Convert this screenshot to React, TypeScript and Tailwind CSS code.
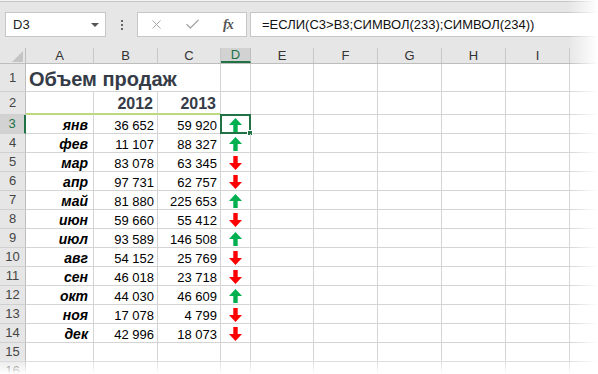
import { X, Check } from 'lucide-react';

const COLS = [
  { key: 'A', w: 'w-[68px]' },
  { key: 'B', w: 'w-[64px]' },
  { key: 'C', w: 'w-[63px]' },
  { key: 'D', w: 'w-[30px]' },
  { key: 'E', w: 'w-[63px]' },
  { key: 'F', w: 'w-[64px]' },
  { key: 'G', w: 'w-[64px]' },
  { key: 'H', w: 'w-[64px]' },
  { key: 'I', w: 'w-[64px]' },
  { key: 'J', w: 'w-[64px]' },
];

const DATA: [string, string, string][] = [
  ['янв', '36 652', '59 920'],
  ['фев', '11 107', '88 327'],
  ['мар', '83 078', '63 345'],
  ['апр', '97 731', '62 757'],
  ['май', '81 880', '225 653'],
  ['июн', '59 660', '55 412'],
  ['июл', '93 589', '146 508'],
  ['авг', '54 152', '25 769'],
  ['сен', '46 018', '23 718'],
  ['окт', '44 030', '46 609'],
  ['ноя', '17 078', '4 799'],
  ['дек', '42 996', '18 073'],
];

const toNum = (s: string) => Number(s.replace(/\s/g, ''));

function Arrow({ up }: { up: boolean }) {
  return (
    <svg width="13" height="14" viewBox="0 0 13 14" className={up ? '' : 'rotate-180'}>
      <polygon
        points="6.5,0 13,7 8.7,7 8.7,14 4.3,14 4.3,7 0,7"
        fill={up ? '#00b050' : '#ff0000'}
      />
    </svg>
  );
}

function RowHead({ n, h, active }: { n: number; h: string; active?: boolean }) {
  return (
    <div
      className={`${h} w-[26px] shrink-0 flex items-center justify-center border-b border-[#d0d0d0] text-[13px] ${
        active
          ? 'bg-[#d2d2d2] text-[#217346] border-r-2 border-r-[#217346]'
          : 'bg-[#e6e6e6] text-[#444] border-r border-r-[#bdbdbd]'
      }`}
    >
      {n}
    </div>
  );
}

function Cell({
  w,
  className = '',
  children,
}: {
  w: string;
  className?: string;
  children?: React.ReactNode;
}) {
  return (
    <div className={`${w} shrink-0 border-r border-b border-[#d4d4d4] flex items-center ${className}`}>
      {children}
    </div>
  );
}

export default function App() {
  return (
    <div
      className="relative w-[598px] h-[374px] overflow-hidden bg-white text-black"
      style={{ fontFamily: '"Liberation Sans", Arial, sans-serif' }}
    >
      {/* Formula bar */}
      <div className="h-px bg-[#f4f4f4]" />
      <div className="h-[47px] bg-[#e6e6e6] border-t border-[#c6c6c6] flex items-start pt-[10px]">
        <div className="ml-[5px] w-[101px] h-[25px] bg-white border border-[#c6c6c6] flex items-center justify-between pl-[7px] pr-[6px] text-[13px] text-[#222]">
          <span>D3</span>
          <span className="w-0 h-0 border-l-[4px] border-r-[4px] border-t-[4px] border-l-transparent border-r-transparent border-t-[#555]" />
        </div>
        <div className="w-[31px] h-[25px] flex flex-col items-center justify-center gap-[2px]">
          <span className="w-[2px] h-[2px] bg-[#666]" />
          <span className="w-[2px] h-[2px] bg-[#666]" />
          <span className="w-[2px] h-[2px] bg-[#666]" />
        </div>
        <div className="w-[110px] h-[25px] bg-white border border-[#c6c6c6] flex items-center">
          <X size={15} strokeWidth={1.6} className="ml-[11px] text-[#a6a6a6]" />
          <Check size={17} strokeWidth={1.8} className="ml-[20px] text-[#a6a6a6]" />
          <span
            className="ml-[22px] text-[14px] italic font-bold text-[#555] tracking-[-1px]"
            style={{ fontFamily: '"Liberation Serif", serif' }}
          >
            fx
          </span>
        </div>
        <div className="ml-[3px] flex-1 h-[25px] bg-white border border-[#c6c6c6] border-r-0 flex items-center pl-[11px] text-[13px] text-[#111] whitespace-nowrap">
          =ЕСЛИ(C3&gt;B3;СИМВОЛ(233);СИМВОЛ(234))
        </div>
      </div>

      {/* Column headers */}
      <div className="flex h-[16px] bg-[#e6e6e6] border-b border-[#bdbdbd]">
        <div className="w-[26px] shrink-0 border-r border-[#bdbdbd] flex items-end justify-end pr-[2px] pb-[1px]">
          <svg width="11" height="11" viewBox="0 0 11 11">
            <polygon points="11,0 11,11 0,11" fill="#c4c4c4" />
          </svg>
        </div>
        {COLS.map((c) =>
          c.key === 'D' ? (
            <div
              key={c.key}
              className={`${c.w} shrink-0 bg-[#d2d2d2] border-r border-[#bdbdbd] border-b-2 border-b-[#217346] flex items-center justify-center text-[13px] text-[#217346]`}
            >
              D
            </div>
          ) : (
            <div
              key={c.key}
              className={`${c.w} shrink-0 border-r border-[#c8c8c8] flex items-center justify-center text-[13px] text-[#333]`}
            >
              {c.key === 'J' ? '' : c.key}
            </div>
          )
        )}
      </div>

      {/* Row 1 */}
      <div className="flex">
        <RowHead n={1} h="h-[28px]" />
        <div className="w-[195px] shrink-0 h-[28px] border-r border-b border-[#d4d4d4] flex items-center pl-[3px] pt-[2px] text-[20px] font-bold text-[#353c47] whitespace-nowrap">
          Объем продаж
        </div>
        {COLS.slice(3).map((c) => (
          <Cell key={c.key} w={c.w} className="h-[28px]" />
        ))}
      </div>

      {/* Row 2 */}
      <div className="flex">
        <RowHead n={2} h="h-[23px]" />
        <Cell w="w-[68px]" className="h-[23px] border-b-2 border-b-[#bcd97d]" />
        <Cell w="w-[64px]" className="h-[23px] pt-[2px] border-b-2 border-b-[#bcd97d] justify-end pr-[4px] text-[16px] font-bold text-[#353c47]">
          2012
        </Cell>
        <Cell w="w-[63px]" className="h-[23px] pt-[2px] border-b-2 border-b-[#bcd97d] justify-end pr-[4px] text-[16px] font-bold text-[#353c47]">
          2013
        </Cell>
        {COLS.slice(3).map((c) => (
          <Cell key={c.key} w={c.w} className="h-[23px]" />
        ))}
      </div>

      {/* Data rows */}
      {DATA.map(([m, a, b], i) => (
        <div className="flex" key={m}>
          <RowHead n={i + 3} h="h-[19px]" active={i === 0} />
          <Cell w="w-[68px]" className="h-[19px] pt-[3px] justify-end pr-[5px] text-[14px] font-bold italic">
            {m}
          </Cell>
          <Cell w="w-[64px]" className="h-[19px] pt-[3px] justify-end pr-[3px] text-[13px]">
            {a}
          </Cell>
          <Cell w="w-[63px]" className="h-[19px] pt-[3px] justify-end pr-[3px] text-[13px]">
            {b}
          </Cell>
          <Cell w="w-[30px]" className="h-[19px] pt-px justify-center relative">
            <Arrow up={toNum(b) > toNum(a)} />
            {i === 0 && (
              <div className="absolute -left-px -top-px w-[31px] h-[20px] border-2 border-[#217346]">
                <span className="absolute -right-[4px] -bottom-[4px] w-[6px] h-[6px] bg-[#217346] border border-white" />
              </div>
            )}
          </Cell>
          {COLS.slice(4).map((c) => (
            <Cell key={c.key} w={c.w} className="h-[19px]" />
          ))}
        </div>
      ))}

      {/* Empty rows */}
      {[15, 16].map((n) => (
        <div className="flex" key={n}>
          <RowHead n={n} h="h-[19px]" />
          {COLS.map((c) => (
            <Cell key={c.key} w={c.w} className="h-[19px]" />
          ))}
        </div>
      ))}

      {/* Torn-edge fades */}
      <div className="absolute top-0 right-0 h-full w-[30px] bg-linear-to-r from-white/0 to-white" />
      <div className="absolute bottom-0 left-0 w-full h-[16px] bg-linear-to-b from-white/0 to-white" />
    </div>
  );
}
